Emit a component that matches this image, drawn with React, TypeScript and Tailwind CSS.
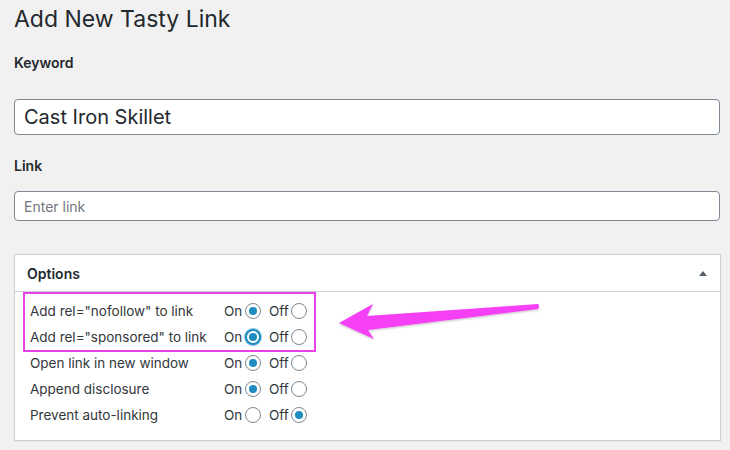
const font = { fontFamily: 'Inter, "Noto Sans", sans-serif' };

type Opt = { label: string; on: boolean; focus?: boolean };

const highlighted: Opt[] = [
  { label: 'Add rel="nofollow" to link', on: true },
  { label: 'Add rel="sponsored" to link', on: true, focus: true },
];

const others: Opt[] = [
  { label: 'Open link in new window', on: true },
  { label: 'Append disclosure', on: true },
  { label: 'Prevent auto-linking', on: false },
];

const Radio = ({ checked, focus }: { checked: boolean; focus?: boolean }) => (
  <span
    className={
      'relative flex h-4 w-4 items-center justify-center rounded-full bg-white ' +
      (focus
        ? 'border-2 border-[#1e8cbe] shadow-[0_0_0_1px_#8ac4e4]'
        : 'border border-[#7e8993]')
    }
  >
    {checked && <span className="h-2 w-2 rounded-full bg-[#1e8cbe]" />}
  </span>
);

const Row = ({ opt }: { opt: Opt }) => (
  <div className="flex h-[26px] items-center text-[13.5px] text-[#32373c]">
    <span className="w-[194px]">{opt.label}</span>
    <span className="w-[21px]">On</span>
    <Radio checked={opt.on} focus={opt.focus} />
    <span className="ml-2 w-[22px]">Off</span>
    <Radio checked={!opt.on} />
  </div>
);

export default function App() {
  return (
    <div className="h-[450px] w-[730px] overflow-hidden bg-[#f1f1f1] pl-[14px] pr-[10px] text-[#23282d]" style={font}>
      <h1 className="pt-[5px] text-[23px] leading-[29px] font-normal">Add New Tasty Link</h1>

      <div className="mt-[20px] text-[14px] leading-[18px] font-semibold">Keyword</div>
      <div className="mt-[27px] flex h-[36px] w-[706px] items-center rounded-[4px] border border-[#7e8993] bg-white px-[9px] text-[20px]">
        Cast Iron Skillet
      </div>

      <div className="mt-[22px] text-[14px] leading-[18px] font-semibold">Link</div>
      <div className="mt-[16px] flex h-[30px] w-[706px] items-center rounded-[4px] border border-[#7e8993] bg-white px-[9px] text-[14px] text-[#72777c]">
        Enter link
      </div>

      <div className="relative mt-[33px] w-[707px] border border-[#ccd0d4] bg-white shadow-[0_1px_1px_rgba(0,0,0,0.04)]">
        <div className="flex h-[37px] items-center justify-between border-b border-[#ccd0d4] pl-[12px] pr-[12px]">
          <span className="text-[14px] font-semibold">Options</span>
          <svg width="10" height="8" viewBox="0 0 10 8">
            <path d="M1 7 L5 2 L9 7 Z" fill="#555d66" />
          </svg>
        </div>
        <div className="pb-[12px]">
          <div className="ml-[8px] w-[293px] border-2 border-[#e940e9] pt-[4px] pl-[5px]">
            {highlighted.map((o) => (
              <Row key={o.label} opt={o} />
            ))}
          </div>
          <div className="-mt-[2px] pl-[15px]">
            {others.map((o) => (
              <Row key={o.label} opt={o} />
            ))}
          </div>
        </div>

        <svg
          className="absolute left-0 top-0"
          width="707"
          height="190"
          viewBox="0 0 707 190"
        >
          <defs>
            <filter id="sh" x="-10%" y="-50%" width="120%" height="200%">
              <feDropShadow dx="0" dy="1" stdDeviation="1" floodColor="#000" floodOpacity="0.25" />
            </filter>
          </defs>
          <path
            d="M324 68 L358 49 L352 61 L523 49 Q525 51 523 54 L353 75 L359 84 Z"
            fill="#f53ff5"
            filter="url(#sh)"
          />
        </svg>
      </div>
    </div>
  );
}
